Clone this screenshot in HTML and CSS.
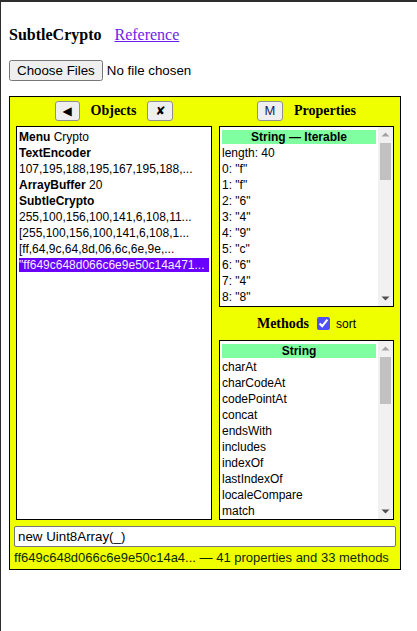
FILE: index.html
```html
<!DOCTYPE html>
<html>
<head>
<meta charset="utf-8">
<title>SubtleCrypto</title>
<link rel="stylesheet" href="styles.css">
</head>
<body>
<div class="page">
  <p class="title"><b>SubtleCrypto</b><a class="ref" href="#">Reference</a></p>
  <p class="file"><input type="file" class="filein" multiple></p>
  <div class="panel">
    <div class="cols">
      <div class="col">
        <div class="colhead">
          <button class="btn glyph">◀</button>
          <span class="h">Objects</span>
          <button class="btn glyph x">✘</button>
        </div>
        <div class="list objects">
          <div class="lbody">
            <div class="row"><b>Menu</b> Crypto</div>
            <div class="row"><b>TextEncoder</b></div>
            <div class="row">107,195,188,195,167,195,188,...</div>
            <div class="row"><b>ArrayBuffer</b> 20</div>
            <div class="row"><b>SubtleCrypto</b></div>
            <div class="row">255,100,156,100,141,6,108,11...</div>
            <div class="row">[255,100,156,100,141,6,108,1...</div>
            <div class="row">[ff,64,9c,64,8d,06,6c,6e,9e,...</div>
            <div class="row sel">"ff649c648d066c6e9e50c14a471...</div>
          </div>
        </div>
      </div>
      <div class="col">
        <div class="colhead">
          <button class="btn m">M</button>
          <span class="h">Properties</span>
        </div>
        <div class="list props">
          <div class="lbody">
            <div class="row hdr">String — Iterable</div>
            <div class="row">length: 40</div>
            <div class="row">0: "f"</div>
            <div class="row">1: "f"</div>
            <div class="row">2: "6"</div>
            <div class="row">3: "4"</div>
            <div class="row">4: "9"</div>
            <div class="row">5: "c"</div>
            <div class="row">6: "6"</div>
            <div class="row">7: "4"</div>
            <div class="row">8: "8"</div>
          </div>
          <div class="sbar">
            <svg class="sbtn" width="15" height="15" viewBox="0 0 15 15"><polygon points="3.5,9.5 11.5,9.5 7.5,5.5" fill="#a3a3a3"/></svg>
            <div class="strack"><div class="thumb thumb-props"></div></div>
            <svg class="sbtn" width="15" height="15" viewBox="0 0 15 15"><polygon points="3.5,5.5 11.5,5.5 7.5,9.5" fill="#505050"/></svg>
          </div>
        </div>
        <div class="mhead">
          <span class="h">Methods</span>
          <input type="checkbox" class="chk" checked>
          <span class="sort">sort</span>
        </div>
        <div class="list methods">
          <div class="lbody">
            <div class="row hdr">String</div>
            <div class="row">charAt</div>
            <div class="row">charCodeAt</div>
            <div class="row">codePointAt</div>
            <div class="row">concat</div>
            <div class="row">endsWith</div>
            <div class="row">includes</div>
            <div class="row">indexOf</div>
            <div class="row">lastIndexOf</div>
            <div class="row">localeCompare</div>
            <div class="row">match</div>
          </div>
          <div class="sbar">
            <svg class="sbtn" width="15" height="15" viewBox="0 0 15 15"><polygon points="3.5,9.5 11.5,9.5 7.5,5.5" fill="#a3a3a3"/></svg>
            <div class="strack"><div class="thumb thumb-methods"></div></div>
            <svg class="sbtn" width="15" height="15" viewBox="0 0 15 15"><polygon points="3.5,5.5 11.5,5.5 7.5,9.5" fill="#505050"/></svg>
          </div>
        </div>
      </div>
    </div>
    <input type="text" class="expr" value="new Uint8Array(_)">
    <div class="status">ff649c648d066c6e9e50c14a4... — 41 properties and 33 methods</div>
  </div>
</div>
</body>
</html>
```

FILE: styles.css
```css
html, body {
  margin: 0;
  padding: 0;
  background: #fff;
}

.page {
  box-sizing: border-box;
  min-height: 100vh;
  border-top: 2px solid #2e2e2e;
  border-left: 1px solid #2e2e2e;
  padding: 8px;
  font-family: "Liberation Serif", serif;
  font-size: 16px;
  color: #000;
}

.title {
  margin: 16px 0;
  line-height: 18px;
}

.ref {
  margin-left: 13px;
  color: #6c1ee8;
  text-decoration: underline;
}

.file {
  margin: 16px 0 15px;
  height: 21px;
}

.filein {
  font-family: "Liberation Sans", sans-serif;
  font-size: 13.33px;
  margin: 0;
}

.panel {
  box-sizing: border-box;
  width: 392px;
  border: 1px solid #000;
  background: #f0ff00;
  padding: 4px 4px 4px;
}

.cols {
  display: grid;
  grid-template-columns: 196px 175px;
  column-gap: 7px;
  margin: 0 2px;
}

.col {
  display: flex;
  flex-direction: column;
}

.colhead {
  display: flex;
  justify-content: center;
  align-items: center;
  gap: 11px;
  height: 20px;
  margin-bottom: 5px;
}

.h {
  font-family: "Liberation Serif", serif;
  font-weight: 700;
  font-size: 14px;
}

.btn {
  box-sizing: border-box;
  width: 25px;
  height: 20px;
  padding: 0;
  margin: 0;
  border: 1px solid #8f8f8f;
  border-radius: 3px;
  background: #efefef;
  color: #000;
  font-size: 13px;
  line-height: 18px;
}

.glyph {
  font-family: "DejaVu Sans", sans-serif;
  font-size: 12px;
}

.x {
  width: 26px;
  font-weight: 700;
}

.m {
  width: 26px;
  font-family: "Liberation Sans", sans-serif;
  font-size: 13px;
  color: #1e1e66;
}

.list {
  box-sizing: border-box;
  display: flex;
  border: 1px solid #000;
  background: #fff;
  overflow: hidden;
  font-family: "Liberation Sans", sans-serif;
  font-size: 12px;
  color: #000;
}

.lbody {
  flex: 1;
  min-width: 0;
  padding: 3px 2px;
  overflow: hidden;
}

.sbar {
  width: 15px;
  flex: none;
  display: flex;
  flex-direction: column;
  background: #f1f1f1;
}

.sbtn {
  display: block;
  flex: none;
}

.strack {
  flex: 1;
  padding-top: 1px;
}

.thumb {
  margin: 0 2px 0 2px;
  background: #c1c1c1;
}

.thumb-props {
  height: 37px;
}

.thumb-methods {
  height: 47px;
}

.objects {
  height: 394px;
}

.props {
  height: 181px;
}

.methods {
  height: 180px;
}

.row {
  height: 14px;
  line-height: 14px;
  margin-bottom: 2px;
  white-space: nowrap;
  overflow: hidden;
}

.sel {
  background: #6a00ff;
  color: #f4eeff;
}

.hdr {
  background: #80ffa0;
  font-weight: 700;
  text-align: center;
}

.mhead {
  display: flex;
  justify-content: center;
  align-items: center;
  height: 33px;
}

.chk {
  width: 13px;
  height: 13px;
  margin: 0 6px 0 8px;
  accent-color: #4f4ff5;
}

.sort {
  font-family: "Liberation Sans", sans-serif;
  font-size: 12px;
}

.expr {
  box-sizing: border-box;
  display: block;
  width: 382px;
  height: 21px;
  margin: 6px 0 0;
  padding: 1px 3px;
  border: 1px solid #767676;
  border-radius: 2px;
  background: #fff;
  font-family: "Liberation Sans", sans-serif;
  font-size: 13.33px;
  color: #000;
}

.status {
  padding-top: 3px;
  height: 15px;
  line-height: 15px;
  font-family: "Liberation Sans", sans-serif;
  font-size: 13px;
  color: #0a2a00;
  white-space: nowrap;
}
```
